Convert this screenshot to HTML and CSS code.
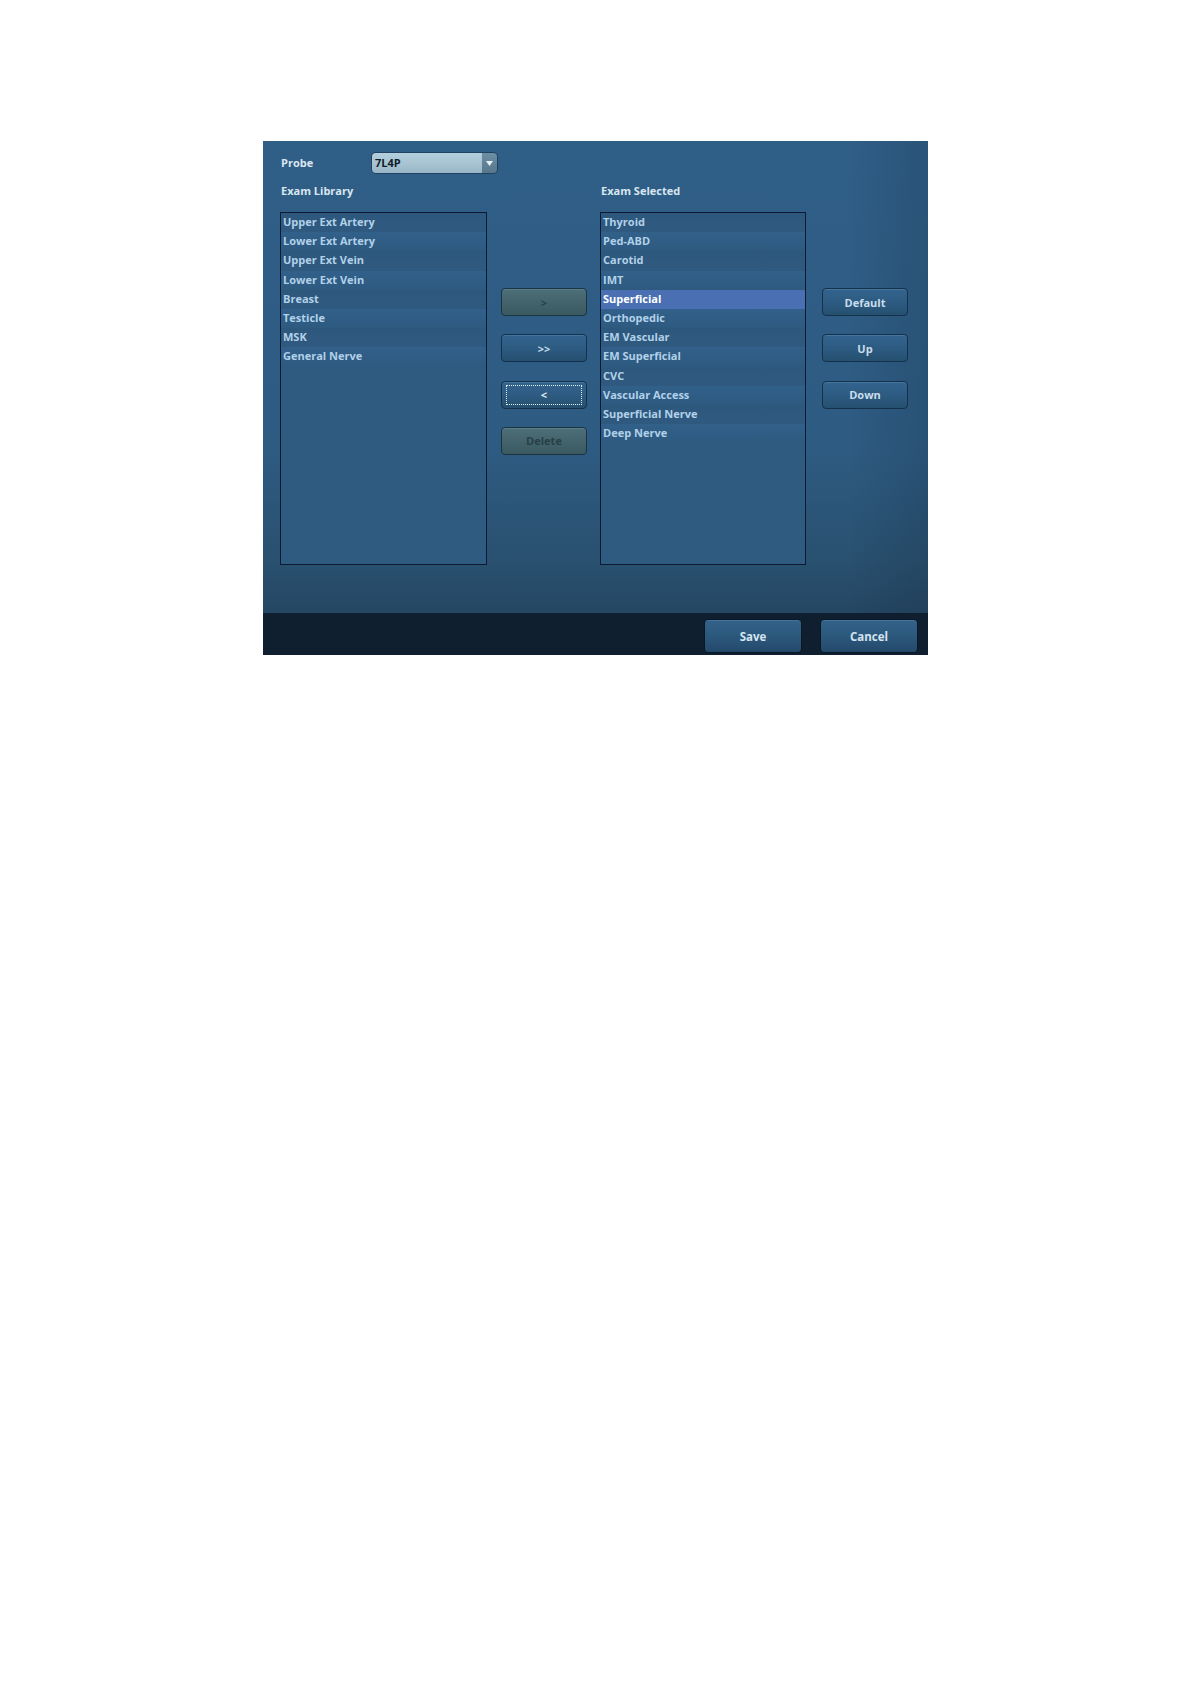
FILE: index.html
```html
<!DOCTYPE html>
<html>
<head>
<meta charset="utf-8">
<link rel="stylesheet" href="styles.css">
</head>
<body>
<div class="dialog">
  <div class="main">
    <div class="probe-row">
      <span class="label probe-label">Probe</span>
      <div class="combo">
        <span class="combo-value">7L4P</span>
        <span class="combo-arrow"><svg width="7" height="5" viewBox="0 0 7 5"><path d="M0 0 L7 0 L3.5 5 Z" fill="#e8f0f4"/></svg></span>
      </div>
    </div>
    <div class="columns">
      <div class="col list-col">
        <div class="label col-label">Exam Library</div>
        <ul class="list">
          <li>Upper Ext Artery</li>
          <li>Lower Ext Artery</li>
          <li>Upper Ext Vein</li>
          <li>Lower Ext Vein</li>
          <li>Breast</li>
          <li>Testicle</li>
          <li>MSK</li>
          <li>General Nerve</li>
        </ul>
      </div>
      <div class="col btn-col mid">
        <button class="btn disabled">&gt;</button>
        <button class="btn">&gt;&gt;</button>
        <button class="btn focus"><span class="focus-ring">&lt;</span></button>
        <button class="btn disabled">Delete</button>
      </div>
      <div class="col list-col right-list">
        <div class="label col-label">Exam Selected</div>
        <ul class="list">
          <li>Thyroid</li>
          <li>Ped-ABD</li>
          <li>Carotid</li>
          <li>IMT</li>
          <li class="selected">Superficial</li>
          <li>Orthopedic</li>
          <li>EM Vascular</li>
          <li>EM Superficial</li>
          <li>CVC</li>
          <li>Vascular Access</li>
          <li>Superficial Nerve</li>
          <li>Deep Nerve</li>
        </ul>
      </div>
      <div class="col btn-col side">
        <button class="btn">Default</button>
        <button class="btn">Up</button>
        <button class="btn">Down</button>
      </div>
    </div>
  </div>
  <div class="footer">
    <button class="btn big">Save</button>
    <button class="btn big">Cancel</button>
  </div>
</div>
</body>
</html>
```
FILE: styles.css
```css
html, body {
  margin: 0;
  padding: 0;
  background: #ffffff;
}
body {
  font-family: "Open Sans", "DejaVu Sans", sans-serif;
  font-weight: 700;
  font-size: 11px;
}
.dialog {
  margin: 141px 0 0 263px;
  width: 665px;
  height: 514px;
  display: flex;
  flex-direction: column;
  background: linear-gradient(180deg, #2f5e87 0%, #2e5b82 60%, #29506f 82%, #213f5a 100%);
  box-sizing: border-box;
}
.main {
  flex: 1;
  padding: 12px 0 0 17px;
  position: relative;
  background: linear-gradient(90deg, rgba(0,0,0,0) 0%, rgba(0,0,0,0) 88%, rgba(10,25,40,0.15) 100%);
}
.label {
  color: #d9e6f0;
  font-size: 11px;
  line-height: 16px;
}
.probe-row {
  display: flex;
  align-items: center;
  height: 20px;
  padding-left: 1px;
}
.probe-label {
  width: 91px;
}
.combo {
  display: flex;
  width: 125px;
  height: 20px;
  border-radius: 4px;
  overflow: hidden;
  box-shadow: 0 0 0 1px #1f4262;
}
.combo-value {
  flex: 1;
  background: linear-gradient(180deg, #b3cfdc 0%, #a6c2d1 60%, #97b5c6 100%);
  color: #0f1c26;
  font-size: 11px;
  line-height: 20px;
  padding-left: 3px;
}
.combo-arrow {
  width: 15px;
  background: linear-gradient(180deg, #6d8ea3 0%, #58778d 100%);
  display: flex;
  align-items: center;
  justify-content: center;
}
.columns {
  display: flex;
  margin-top: 10px;
}
.col-label {
  padding-left: 1px;
  height: 16px;
}
.list-col {
  width: 207px;
}
.right-list {
  width: 206px;
  margin-left: 13px;
}
.list {
  list-style: none;
  margin: 13px 0 0 0;
  padding: 0;
  height: 353px;
  box-sizing: border-box;
  border: 1px solid #0c1a33;
  background: #2f5b80;
}
.list li {
  height: 19.2px;
  line-height: 18px;
  padding-left: 2px;
  color: #b2d1e9;
  font-size: 11px;
  white-space: nowrap;
}
.list li:nth-child(odd) {
  background: linear-gradient(180deg, #2d587d 0%, #30597f 100%);
}
.list li:nth-child(even) {
  background: linear-gradient(180deg, #31608a 0%, #2e5a80 100%);
}
.list li.selected {
  background: #4a6fb3;
  color: #ffffff;
}
.btn-col {
  display: flex;
  flex-direction: column;
  gap: 18.3px;
  width: 86px;
  padding-top: 77px;
  margin-top: 28px;
}
.mid {
  margin-left: 14px;
}
.side {
  margin-left: 16px;
}
.btn {
  display: flex;
  align-items: center;
  justify-content: center;
  width: 86px;
  height: 28px;
  padding: 0;
  margin: 0;
  border: 1px solid #15304a;
  border-radius: 4px;
  background: linear-gradient(180deg, #33648e 0%, #2d5b82 50%, #25506f 100%);
  box-shadow: inset 0 1px 0 rgba(120,170,210,0.25);
  color: #c9ddec;
  font-family: "Open Sans", "DejaVu Sans", sans-serif;
  font-weight: 700;
  font-size: 11px;
  box-sizing: border-box;
}
.btn.disabled {
  background: linear-gradient(180deg, #4d6f78 0%, #44646d 50%, #3a5961 100%);
  color: #293f46;
  border-color: #1b3440;
}
.btn.focus {
  padding: 3px 4px;
}
.focus-ring {
  flex: 1;
  align-self: stretch;
  display: flex;
  align-items: center;
  justify-content: center;
  border: 1px dotted #e4eef5;
  color: #e4eef5;
}
.footer {
  height: 42px;
  background: #0f1f30;
  display: flex;
  justify-content: flex-end;
  gap: 18px;
  padding: 6px 10px 2px 0;
  box-sizing: border-box;
}
.btn.big {
  width: 98px;
  height: 34px;
  font-size: 11.5px;
  border-color: #0a1826;
  background: linear-gradient(180deg, #336289 0%, #2c587d 50%, #24496a 100%);
  color: #d4e4f0;
}
```
